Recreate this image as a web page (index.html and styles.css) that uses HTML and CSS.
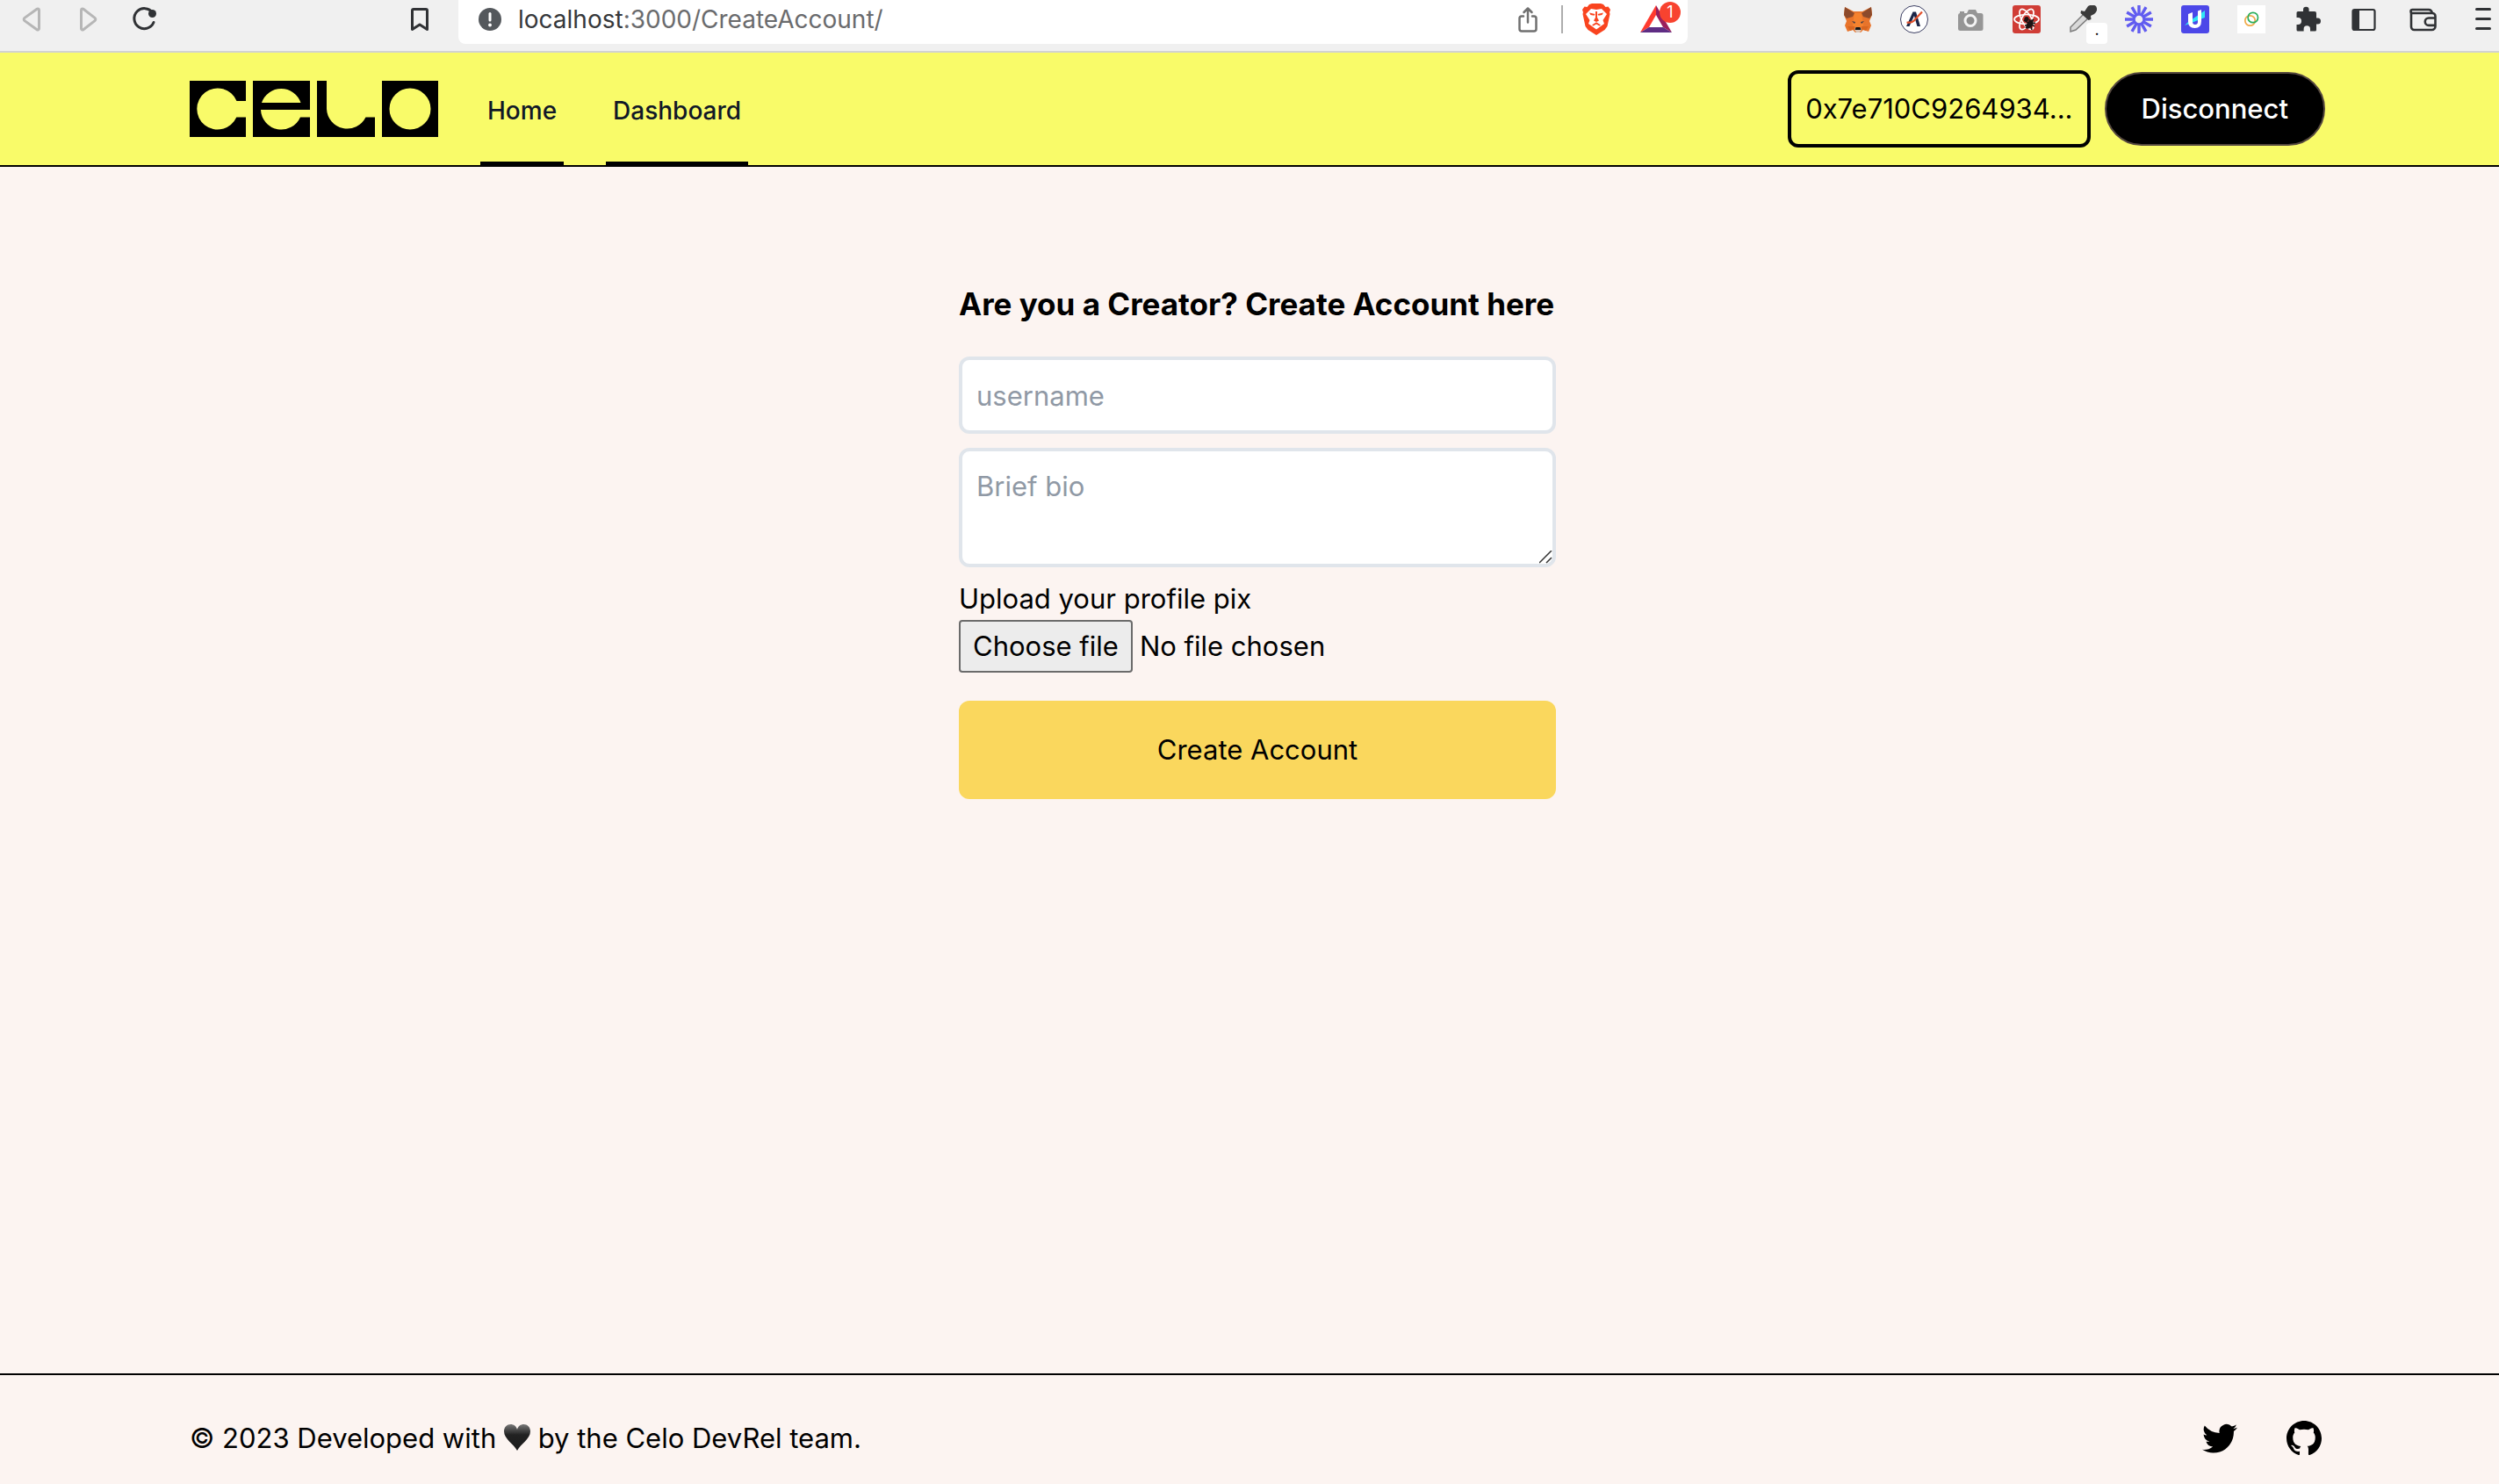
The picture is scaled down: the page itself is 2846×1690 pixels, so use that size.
FILE: index.html
```html
<!DOCTYPE html>
<html lang="en">
<head>
<meta charset="utf-8">
<title>Create Account</title>
<link rel="stylesheet" href="styles.css">
</head>
<body>
<div class="toolbar">
  <div class="toolbar-nav">
    <button class="tool" aria-label="Back"><svg viewBox="0 0 32 32"><path d="M24.500 5.500a1.500 1.500 0 0 0-2.400-1.200L8 14.400a2 2 0 0 0 0 3.200l14.100 10.100a1.500 1.500 0 0 0 2.400-1.200z" fill="none" stroke="#b6b6b6" stroke-width="3"/></svg></button>
    <button class="tool" aria-label="Forward"><svg viewBox="0 0 32 32"><path d="M8.500 5.500a1.500 1.500 0 0 1 2.400-1.200L24 14.400a2 2 0 0 1 0 3.200L10.900 27.700a1.500 1.500 0 0 1-2.400-1.200z" fill="none" stroke="#b6b6b6" stroke-width="3"/></svg></button>
    <button class="tool" aria-label="Reload"><svg viewBox="0 0 32 32"><path d="M25.800 8.500A11.500 11.500 0 1 0 27 19.500" fill="none" stroke="#303235" stroke-width="3" stroke-linecap="round"/><circle cx="25.500" cy="9.500" r="4.500" fill="#303235"/></svg></button>
    <button class="tool bookmark" aria-label="Bookmark"><svg viewBox="0 0 32 32"><path d="M7.500 6a1.500 1.500 0 0 1 1.500-1.500h14A1.500 1.500 0 0 1 24.500 6v21.500L16 22l-8.500 5.500z" fill="none" stroke="#303235" stroke-width="3" stroke-linejoin="round"/></svg></button>
  </div>
  <div class="address">
    <svg class="site-info" viewBox="0 0 28 28" aria-hidden="true"><circle cx="14" cy="14" r="13" fill="#54585c"/><path d="M14 7.500v7.500" stroke="#fff" stroke-width="3" stroke-linecap="round"/><circle cx="14" cy="20.500" r="1.900" fill="#fff"/></svg>
    <span class="url"><span class="host">localhost</span>:3000/CreateAccount/</span>
    <button class="tool share" aria-label="Share"><svg viewBox="0 0 32 32"><path d="M11 12.500H9A2.500 2.500 0 0 0 6.500 15v12A2.500 2.500 0 0 0 9 29.500h14a2.500 2.500 0 0 0 2.500-2.500V15a2.500 2.500 0 0 0-2.500-2.500h-2M16 19.500V4M11.500 8L16 3.500 20.500 8" fill="none" stroke="#707070" stroke-width="2.500" stroke-linecap="round" stroke-linejoin="round"/></svg></button>
    <span class="divider"></span>
    <button class="tool shield" aria-label="Shields"><svg viewBox="0 0 32 36"><path d="M8 1l3-1h10l3 1 2.500 3 3-.500L32 7l-1 3 .500 2-3 14-3 4L16 36l-9.500-6-3-4L.500 12 1 10 0 7l2.500-3.500 3 .500z" fill="#f9441f"/><path d="M10 6l6 1 6-1 6 6-4.500 7 1.500 4-9 6.500L7 23l1.500-4L4 12z" fill="#fff"/><path d="M8 10.500l6.500 1.500-1 1.800-4-.800zM24 10.500L17.500 12l1 1.800 4-.800zM15 9h2v7l2 3.500-3 1.500-3-1.500 2-3.500zM11 24.500l5-3.200 5 3.200-1.500 1-3.500-2-3.500 2z" fill="#f9441f"/></svg></button>
    <button class="tool rewards" aria-label="Rewards, 1 notification"><svg viewBox="0 0 36 32"><path d="M18 0L0 31l10-6 8-14z" fill="#ff3b2f"/><path d="M18 0l18 31-10-6-8-14z" fill="#9b1f5c"/><path d="M0 31h36l-10-6H10z" fill="#5f2d84"/></svg><span class="badge">1</span></button>
  </div>
  <div class="extensions">
    <button class="tool" aria-label="Fox wallet"><svg viewBox="0 0 32 32"><path d="M1 2l10 5h10l10-5 1 9-3 7 2 5-3 7-6-2-3 3h-6l-3-3-6 2-3-7 2-5-3-7z" fill="#e8742b"/><path d="M1 2l11 7-2 4-7 2-3-4zM31 2L20 9l2 4 7 2 3-4z" fill="#8c4a2b"/><path d="M12 9h8l2 14-3 4h-6l-3-4z" fill="#f5822e"/><path d="M4 24l8 0 1 3-6 2zM28 24l-8 0-1 3 6 2z" fill="#d9651f"/><path d="M9 18l4 1-1 2zM23 18l-4 1 1 2z" fill="#413b45"/><path d="M12 28l1-3h6l1 3-2 3h-4z" fill="#d9c7bb"/><path d="M13.500 25h5l1 3h-7z" fill="#161616"/></svg></button>
    <button class="tool" aria-label="A extension"><svg viewBox="0 0 32 32"><circle cx="16" cy="16" r="15.500" fill="#fff" stroke="#3c3f63"/><path d="M7 24l7.500-16.500h3.500L23 24h-3.600L16 12l-5.500 12z" fill="#1b2547"/><path d="M7.500 19.500q7 1 10-4L25 7.500" fill="none" stroke="#e2502b" stroke-width="2.200"/></svg></button>
    <button class="tool" aria-label="Camera"><svg viewBox="0 0 32 32"><path d="M4 9h8l2-4h8l2 4h4a2.500 2.500 0 0 1 2.500 2.500v15A2.500 2.500 0 0 1 28 29H4.500A2.500 2.500 0 0 1 2 26.500v-15A2.500 2.500 0 0 1 4 9zM4 7h5v2H4z" fill="#969696"/><circle cx="16" cy="17.500" r="6" fill="#8e8e8e" stroke="#f4f4f4" stroke-width="3"/></svg></button>
    <button class="tool" aria-label="React debugger"><svg viewBox="0 0 32 32"><rect width="32" height="32" rx="3" fill="#d03d36"/><g fill="none" stroke="#fff" stroke-width="1.700"><ellipse cx="16" cy="16" rx="14" ry="5.500"/><ellipse cx="16" cy="16" rx="13" ry="5.500" transform="rotate(60 16 16)"/><ellipse cx="16" cy="16" rx="13" ry="5.500" transform="rotate(120 16 16)"/></g><ellipse cx="19.500" cy="21.500" rx="3" ry="6" transform="rotate(35 19.500 21.500)" fill="#1c1313"/><path d="M13 17l12 7M14 23l12-3M19 16l3 12M15 26l9-10" stroke="#1c1313" stroke-width="1.600"/><circle cx="16" cy="15.500" r="2.600" fill="#1c1313"/></svg></button>
    <button class="tool picker" aria-label="Color picker"><svg viewBox="0 0 32 32"><path d="M18 9l5 5L8 28l-6 2v-5z" fill="#d9d9d9" stroke="#7d7d7d" stroke-width="1.500"/><path d="M14 6l4 1 4-6q5-3 9 0 3 5-2 9l-4 2 .500 4-3 1-9-8z" fill="#3b3b3b"/></svg><span class="tip">.</span></button>
    <button class="tool" aria-label="Loom"><svg viewBox="0 0 32 32"><g stroke="#615cf0" stroke-width="3.400"><path d="M16 0v32M0 16h32M8 2.140l16 27.720M24 2.140L8 29.860M2.140 8l27.720 16M2.140 24L29.860 8"/></g><circle cx="16" cy="16" r="5.500" fill="#f0f0f0" stroke="#615cf0" stroke-width="2.500"/></svg></button>
    <button class="tool" aria-label="Unstoppable"><svg viewBox="0 0 32 32"><rect width="32" height="32" rx="3" fill="#4c47e8"/><path d="M27 6v8L4 23l4-4z" fill="#2fe4f5"/><path d="M8 10l5-2v11q0 3 3 3t3-3V6.500l4-1.500v13q0 8-7.500 8T8 18.500z" fill="#fff"/></svg></button>
    <button class="tool" aria-label="Rings"><svg viewBox="0 0 32 32"><rect width="32" height="32" fill="#fff"/><circle cx="14.500" cy="17.500" r="5.700" fill="none" stroke="#f0ab4b" stroke-width="1.700"/><circle cx="17.800" cy="14" r="5.700" fill="none" stroke="#2aae5b" stroke-width="1.700"/></svg></button>
    <button class="tool" aria-label="Extensions"><svg viewBox="0 0 32 32"><path d="M5 7h6V5a3.300 3.300 0 0 1 6.600 0v2H24a2 2 0 0 1 2 2v5.500h1.500a3.500 3.500 0 0 1 0 7H26V28a1.500 1.500 0 0 1-1.500 1.500H19V27a3.700 3.700 0 0 0-7.400 0v2.500H5A1.500 1.500 0 0 1 3.500 28v-6H5a4 4 0 0 0 0-8H3.500V8.500A1.500 1.500 0 0 1 5 7z" fill="#303235"/></svg></button>
    <button class="tool" aria-label="Side panel"><svg viewBox="0 0 32 32"><rect x="3.500" y="5" width="25" height="23" rx="2" fill="none" stroke="#303235" stroke-width="2.200"/><path d="M3.500 5H11v23H3.500z" fill="#303235"/></svg></button>
    <button class="tool wallet" aria-label="Wallet"><svg viewBox="0 0 32 32"><path d="M2 8v16.500A3.500 3.500 0 0 0 5.500 28h20a4 4 0 0 0 4-4V12.500a3.500 3.500 0 0 0-3.500-3.500H3.500a1.700 1.700 0 0 1 0-4H22q3 0 4 4M29.500 14.500H22a4.200 4.200 0 0 0 0 8.400h7.500" fill="none" stroke="#303235" stroke-width="2.600"/></svg></button>
    <button class="tool menu" aria-label="Menu"><svg viewBox="0 0 32 32"><path d="M8.500 4.500h15M8.500 15.500h15M8.500 26.500h15" stroke="#303235" stroke-width="3" stroke-linecap="round"/></svg></button>
  </div>
</div>

<header class="header">
  <div class="container header-row">
    <a class="logo" href="#" aria-label="Celo"><svg viewBox="0 0 283 64"><path fill-rule="evenodd" d="M0 0H64V23H53.500A23.500 23.500 0 1 0 53.300 41.500H64V64H0ZM72 0H137V33H81A23.500 23.500 0 0 0 126 41.500H137V64H72ZM82 25A23.500 23.500 0 0 1 126.500 25ZM145 0H156V32A23.500 23.500 0 0 0 200.500 41.500H211V64H145ZM219 0H283V64H219ZM227.500 32a23.500 23.500 0 0 0 47 0a23.500 23.500 0 0 0-47 0Z"/></svg></a>
    <nav class="nav">
      <a href="#">Home</a>
      <a href="#">Dashboard</a>
    </nav>
    <div class="account">
      <span class="wallet-id">0x7e710C9264934...</span>
      <button class="disconnect">Disconnect</button>
    </div>
  </div>
</header>

<main class="main">
  <form class="form">
    <h1>Are you a Creator? Create Account here</h1>
    <input class="field" type="text" placeholder="username" aria-label="username">
    <textarea class="field bio" placeholder="Brief bio" aria-label="Brief bio"></textarea>
    <label class="upload-label" for="pix">Upload your profile pix</label>
    <div class="upload">
      <input class="upload-input" type="file" id="pix">
      <label class="upload-button" for="pix">Choose file</label>
      <span>No file chosen</span>
    </div>
    <button class="submit" type="button">Create Account</button>
  </form>
</main>

<footer class="footer">
  <div class="container footer-row">
    <p class="credit">© 2023 Developed with <svg class="heart" viewBox="0 0 30 30" role="img" aria-label="love"><defs><linearGradient id="shine" x1="0" y1="0" x2="0" y2="1"><stop offset="0" stop-color="#777"/><stop offset=".4" stop-color="#222"/><stop offset="1" stop-color="#1a1a1a"/></linearGradient></defs><path d="M15 30C11 22 0 17 0 8 0 3 3.500 0 7.500 0 11 0 14 2 15 6 16 2 19 0 22.500 0 26.500 0 30 3 30 8 30 17 19 22 15 30z" fill="url(#shine)"/></svg> by the Celo DevRel team.</p>
    <div class="social">
      <a href="#" aria-label="Twitter"><svg viewBox="0 0 24 24"><path d="M8.290 20.251c7.547 0 11.675-6.253 11.675-11.675 0-.178 0-.355-.012-.53A8.348 8.348 0 0022 5.920a8.190 8.190 0 01-2.357.646 4.118 4.118 0 001.804-2.270 8.224 8.224 0 01-2.605.996 4.107 4.107 0 00-6.993 3.743 11.650 11.650 0 01-8.457-4.287 4.106 4.106 0 001.270 5.477A4.072 4.072 0 012.800 9.713v.052a4.105 4.105 0 003.292 4.022 4.095 4.095 0 01-1.853.07 4.108 4.108 0 003.834 2.850A8.233 8.233 0 012 18.407a11.616 11.616 0 006.290 1.840"/></svg></a>
      <a href="#" aria-label="GitHub"><svg viewBox="0 0 24 24"><path d="M12 2C6.477 2 2 6.484 2 12.017c0 4.425 2.865 8.180 6.839 9.504.5.092.682-.217.682-.483 0-.237-.008-.868-.013-1.703-2.782.605-3.369-1.343-3.369-1.343-.454-1.158-1.110-1.466-1.110-1.466-.908-.62.069-.608.069-.608 1.003.07 1.531 1.032 1.531 1.032.892 1.530 2.341 1.088 2.910.832.092-.647.350-1.088.636-1.338-2.220-.253-4.555-1.113-4.555-4.951 0-1.093.390-1.988 1.029-2.688-.103-.253-.446-1.272.098-2.650 0 0 .84-.27 2.750 1.026A9.564 9.564 0 0112 6.844c.85.004 1.705.115 2.504.337 1.909-1.296 2.747-1.027 2.747-1.027.546 1.379.202 2.398.1 2.651.64.7 1.028 1.595 1.028 2.688 0 3.848-2.339 4.695-4.566 4.943.359.309.678.92.678 1.855 0 1.338-.012 2.419-.012 2.747 0 .268.180.580.688.482A10.019 10.019 0 0022 12.017C22 6.484 17.522 2 12 2z"/></svg></a>
    </div>
  </div>
</footer>
</body>
</html>
```

FILE: styles.css
```css
*, *::before, *::after { box-sizing: border-box; }
body {
  margin: 0;
  min-height: 100vh;
  display: flex;
  flex-direction: column;
  background: #fcf4f1;
  color: #000;
  font-family: Inter, "Liberation Sans", sans-serif;
  font-size: 31px;
  line-height: 48px;
}
svg { display: block; }
a { color: inherit; text-decoration: none; }
button, input, textarea { font: inherit; color: inherit; }
button { cursor: pointer; }

/* Browser toolbar */
.toolbar {
  display: flex;
  align-items: flex-start;
  height: 60px;
  padding-right: 2px;
  background: #f0f0f0;
  border-bottom: 2px solid #d2d2d2;
}
.toolbar-nav, .extensions {
  display: flex;
  align-items: center;
  gap: 32px;
  height: 44px;
}
.toolbar-nav { width: 494px; padding-left: 20px; margin-right: 28px; }
.tool {
  position: relative;
  flex: none;
  width: 32px;
  height: 32px;
  padding: 0;
  border: 0;
  background: none;
}
.tool svg { width: 100%; height: 100%; }
.bookmark { margin-left: auto; }
.address {
  flex: 1;
  display: flex;
  align-items: center;
  height: 50px;
  padding: 0 18px 6px 22px;
  background: #fff;
  border-radius: 0 0 8px 8px;
}
.site-info { width: 28px; height: 28px; margin-right: 18px; }
.url { font-size: 28px; color: #6a6b6d; }
.host { color: #36383b; }
.share { margin-left: auto; }
.divider { width: 2px; height: 32px; margin: 0 22px; background: #adadad; }
.shield { height: 36px; margin-right: 34px; }
.rewards { width: 36px; }
.badge {
  position: absolute;
  top: -4px;
  right: -10px;
  width: 24px;
  height: 24px;
  border-radius: 12px;
  background: #f8432f;
  color: #fff;
  font-size: 18px;
  line-height: 24px;
}
.extensions { margin-left: 178px; }
.wallet, .menu { margin-left: 4px; }
.tip {
  position: absolute;
  top: 20px;
  left: 20px;
  width: 24px;
  height: 24px;
  border-radius: 4px;
  background: #fff;
  font-size: 18px;
  line-height: 16px;
}

/* Page frame */
.container { width: 100%; max-width: 2560px; margin: 0 auto; padding: 0 64px; }
.header, .main, .footer { padding-left: 18px; }
.header { background: #f9fb69; border-bottom: 2px solid #000; }
.header-row { display: flex; align-items: center; height: 128px; }
.logo svg { width: 283px; height: 64px; }
.nav {
  display: flex;
  gap: 48px;
  align-self: stretch;
  margin-left: 48px;
  font-size: 28px;
  font-weight: 500;
  color: #111827;
}
.nav a {
  display: flex;
  align-items: center;
  padding: 8px 8px 0;
  border-bottom: 4px solid #000;
}
.account { display: flex; align-items: center; gap: 16px; margin-left: auto; }
.wallet-id {
  padding: 16px;
  border: 4px solid #000;
  border-radius: 12px;
}
.disconnect {
  padding: 16px 40px;
  border: 2px solid #55483f;
  border-radius: 42px;
  background: #000;
  color: #fff;
  font-weight: 500;
}

/* Account form */
.main { flex: 1; padding-top: 128px; }
.form { display: flex; flex-direction: column; width: 680px; margin: 0 auto; }
h1 { margin: 0 0 32px; font-size: 35px; line-height: 56px; font-weight: 700; white-space: nowrap; }
.field {
  width: 100%;
  height: 88px;
  margin: 0 0 16px;
  padding: 16px;
  border: 4px solid #e0e5eb;
  border-radius: 12px;
  background: #fff;
}
.field::placeholder { color: #9099a5; opacity: 1; }
.bio { height: 136px; margin-bottom: 12px; resize: vertical; }
.bio::-webkit-resizer {
  background: url("data:image/svg+xml,%3Csvg xmlns='http://www.w3.org/2000/svg' viewBox='0 0 15 15'%3E%3Cpath d='M0 14L14 0M8 14L14 8' stroke='%23333' stroke-width='1.500'/%3E%3C/svg%3E") no-repeat;
}
.upload { display: flex; align-items: center; gap: 8px; }
.upload-input { position: absolute; opacity: 0; width: 1px; height: 1px; }
.upload-button {
  padding: 4px 14px;
  border: 2px solid #6b6b6b;
  border-radius: 4px;
  background: #ececec;
}
.submit {
  margin-top: 32px;
  padding: 32px;
  border: 0;
  border-radius: 12px;
  background: #fad75d;
}

/* Footer */
.footer { border-top: 2px solid #000; }
.footer-row { display: flex; align-items: center; justify-content: space-between; padding-top: 48px; padding-bottom: 28px; }
.credit { margin: 0; }
.heart { display: inline-block; width: 30px; height: 30px; vertical-align: -3px; }
.social { display: flex; gap: 48px; }
.social svg { width: 48px; height: 48px; }
```
